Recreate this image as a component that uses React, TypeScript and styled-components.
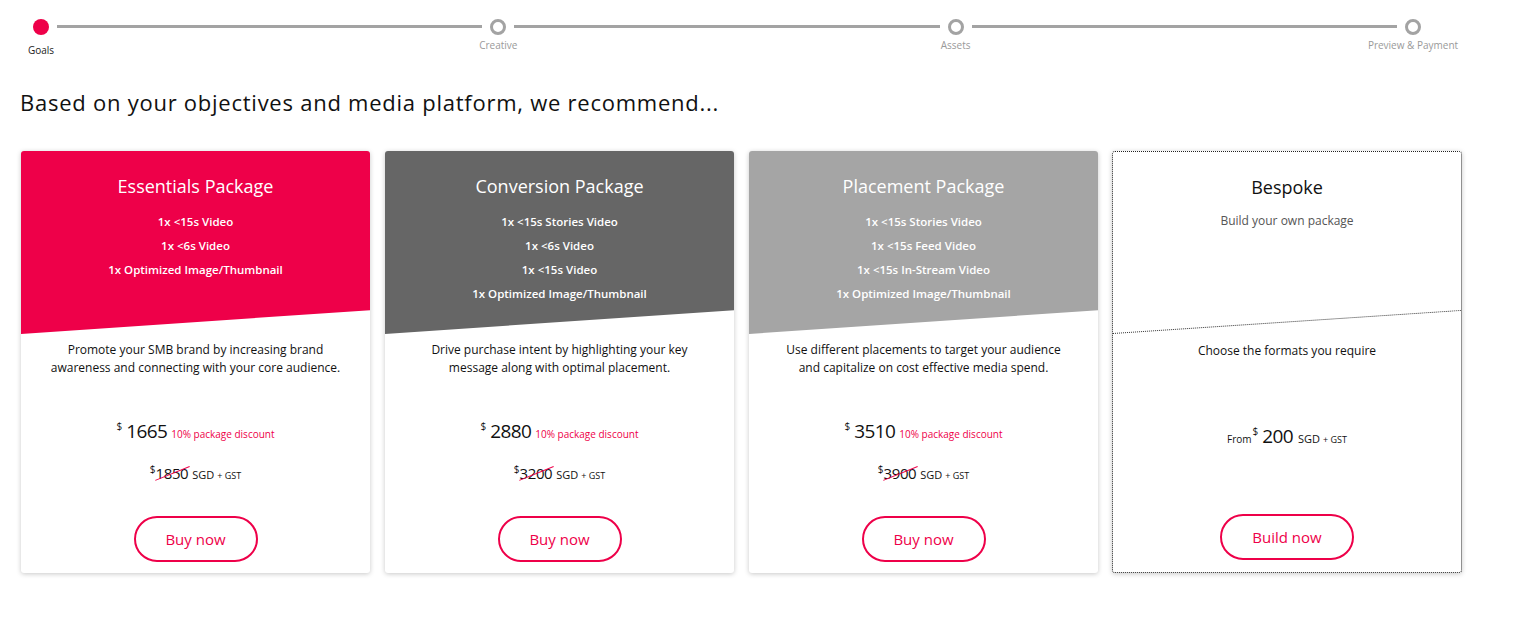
import { type FC } from "react"
import styled, { createGlobalStyle } from "styled-components"

const RED = "#ee0049"

const GlobalStyle = createGlobalStyle`
  body {
    margin: 0;
    background: #fff;
    font-family: "Open Sans", "Noto Sans", Arial, sans-serif;
    color: #111;
  }
`

const Page = styled.main`
  padding: 19px 0 40px 21px;
  width: 1441px;
`

const Stepper = styled.nav`
  display: flex;
  align-items: flex-start;
  margin-left: 12px;
  width: 1388px;
`

const Step = styled.div<{ $active?: boolean }>`
  width: 16px;
  display: flex;
  flex-direction: column;
  align-items: center;

  .dot {
    width: 16px;
    height: 16px;
    box-sizing: border-box;
    border-radius: 50%;
    background: ${p => (p.$active ? RED : "#fff")};
    border: ${p => (p.$active ? "none" : "3px solid #a3a3a3")};
  }

  .label {
    white-space: nowrap;
    font-size: 10px;
    margin-top: ${p => (p.$active ? "8px" : "3px")};
    color: ${p => (p.$active ? "#222" : "#9a9a9a")};
  }
`

const Track = styled.div`
  flex: 1;
  height: 3px;
  background: #a3a3a3;
  margin: 6px 8px 0;
`

const Heading = styled.h1`
  margin: 31px 0 0 -1px;
  font-size: 22px;
  line-height: 28px;
  font-weight: 400;
  letter-spacing: 0.75px;
  color: #111;
`

const Cards = styled.section`
  display: grid;
  grid-template-columns: repeat(4, 349px);
  gap: 15px;
  margin-top: 35px;
`

const Card = styled.article<{ $dotted?: boolean }>`
  height: 422px;
  display: flex;
  flex-direction: column;
  background: #fff;
  border-radius: 3px;
  box-sizing: border-box;
  border: ${p => (p.$dotted ? "1px dotted #222" : "none")};
  margin-left: ${p => (p.$dotted ? "-1px" : "0")};
  box-shadow: 0 1px 5px rgba(0, 0, 0, 0.22);
  overflow: hidden;
`

const Header = styled.header<{ $bg: string; $dotted?: boolean }>`
  position: relative;
  height: 183px;
  flex-shrink: 0;
  box-sizing: border-box;
  padding-top: 24px;
  background: ${p => p.$bg};
  color: ${p => (p.$dotted ? "#111" : "#fff")};
  clip-path: polygon(0 0, 100% 0, 100% 87%, 0 100%);
  text-align: center;

  svg {
    position: absolute;
    left: 0;
    bottom: 0;
  }
`

const Title = styled.h2`
  margin: 0;
  font-size: 18px;
  line-height: 22px;
  font-weight: 400;
`

const Items = styled.ul`
  list-style: none;
  margin: 13px 0 0;
  padding: 0;

  li {
    font-size: 11.5px;
    line-height: 24px;
    font-weight: 600;
  }
`

const Subtitle = styled.p`
  margin: 14px 0 0;
  font-size: 12px;
  color: #555;
`

const Body = styled.div<{ $bottom?: number }>`
  flex: 1;
  display: flex;
  flex-direction: column;
  align-items: center;
  padding: 7px 20px ${p => p.$bottom ?? 11}px;
  text-align: center;
`

const Description = styled.p`
  margin: 0;
  font-size: 12px;
  line-height: 18px;
  min-height: 36px;
  max-width: 292px;
`

const PriceRow = styled.div<{ $top: number }>`
  display: flex;
  align-items: baseline;
  justify-content: center;
  margin-top: ${p => p.$top}px;
  line-height: 24px;

  .cur {
    font-size: 10px;
    align-self: flex-start;
    line-height: 14px;
    margin-right: 4px;
  }
  .amount {
    font-size: 19px;
    letter-spacing: -0.6px;
  }
  .from {
    font-size: 10px;
    margin-right: 1px;
  }
  .discount {
    font-size: 10px;
    color: ${RED};
    margin-left: 4px;
  }
  .unit {
    font-size: 11px;
    margin-left: 5px;
  }
  .gst {
    font-size: 9px;
    margin-left: 3px;
  }
`

const OldPrice = styled.div`
  display: flex;
  align-items: baseline;
  justify-content: center;
  margin-top: 17px;
  line-height: 20px;

  .cur {
    font-size: 10px;
    align-self: flex-start;
    line-height: 12px;
  }
  .was {
    position: relative;
    font-size: 15px;
    letter-spacing: -0.4px;
  }
  .was::after {
    content: "";
    position: absolute;
    left: -2px;
    right: -2px;
    top: 50%;
    height: 1px;
    background: ${RED};
    transform: rotate(-22deg);
  }
  .unit {
    font-size: 11px;
    margin-left: 4px;
  }
  .gst {
    font-size: 9px;
    margin-left: 3px;
  }
`

const Button = styled.button<{ $wide?: boolean }>`
  margin-top: auto;
  width: ${p => (p.$wide ? "134px" : "124px")};
  height: 46px;
  border-radius: 23px;
  border: 2px solid ${RED};
  background: #fff;
  color: ${RED};
  font-family: inherit;
  font-size: 15px;
  cursor: pointer;
`

type Pkg = {
  title: string
  bg: string
  items: string[]
  text: string
  price: string
  was: string
}

const packages: Pkg[] = [
  {
    title: "Essentials Package",
    bg: RED,
    items: ["1x <15s Video", "1x <6s Video", "1x Optimized Image/Thumbnail"],
    text: "Promote your SMB brand by increasing brand awareness and connecting with your core audience.",
    price: "1665",
    was: "1850",
  },
  {
    title: "Conversion Package",
    bg: "#666666",
    items: ["1x <15s Stories Video", "1x <6s Video", "1x <15s Video", "1x Optimized Image/Thumbnail"],
    text: "Drive purchase intent by highlighting your key message along with optimal placement.",
    price: "2880",
    was: "3200",
  },
  {
    title: "Placement Package",
    bg: "#a5a5a5",
    items: [
      "1x <15s Stories Video",
      "1x <15s Feed Video",
      "1x <15s In-Stream Video",
      "1x Optimized Image/Thumbnail",
    ],
    text: "Use different placements to target your audience and capitalize on cost effective media spend.",
    price: "3510",
    was: "3900",
  },
]

const steps = ["Goals", "Creative", "Assets", "Preview & Payment"]

const App: FC = () => (
  <Page>
    <GlobalStyle />
    <Stepper>
      {steps.map((s, i) => (
        <>
          {i > 0 && <Track key={`t${i}`} />}
          <Step key={s} $active={i === 0}>
            <span className="dot" />
            <span className="label">{s}</span>
          </Step>
        </>
      ))}
    </Stepper>

    <Heading>Based on your objectives and media platform, we recommend...</Heading>

    <Cards>
      {packages.map(p => (
        <Card key={p.title}>
          <Header $bg={p.bg}>
            <Title>{p.title}</Title>
            <Items>
              {p.items.map(it => (
                <li key={it}>{it}</li>
              ))}
            </Items>
          </Header>
          <Body>
            <Description>{p.text}</Description>
            <PriceRow $top={42}>
              <span className="cur">$</span>
              <span className="amount">{p.price}</span>
              <span className="discount">10% package discount</span>
            </PriceRow>
            <OldPrice>
              <span className="cur">$</span>
              <span className="was">{p.was}</span>
              <span className="unit">SGD</span>
              <span className="gst">+ GST</span>
            </OldPrice>
            <Button>Buy now</Button>
          </Body>
        </Card>
      ))}

      <Card $dotted>
        <Header $bg="#fff" $dotted>
          <Title>Bespoke</Title>
          <Subtitle>Build your own package</Subtitle>
          <svg width="348" height="25" viewBox="0 0 348 25">
            <line x1="0" y1="23.5" x2="348" y2="0.5" stroke="#333" strokeWidth="1" strokeDasharray="1 1" />
          </svg>
        </Header>
        <Body $bottom={12}>
          <Description>Choose the formats you require</Description>
          <PriceRow $top={46}>
            <span className="from">From</span>
            <span className="cur">$</span>
            <span className="amount">200</span>
            <span className="unit">SGD</span>
            <span className="gst">+ GST</span>
          </PriceRow>
          <Button $wide>Build now</Button>
        </Body>
      </Card>
    </Cards>
  </Page>
)

export default App
